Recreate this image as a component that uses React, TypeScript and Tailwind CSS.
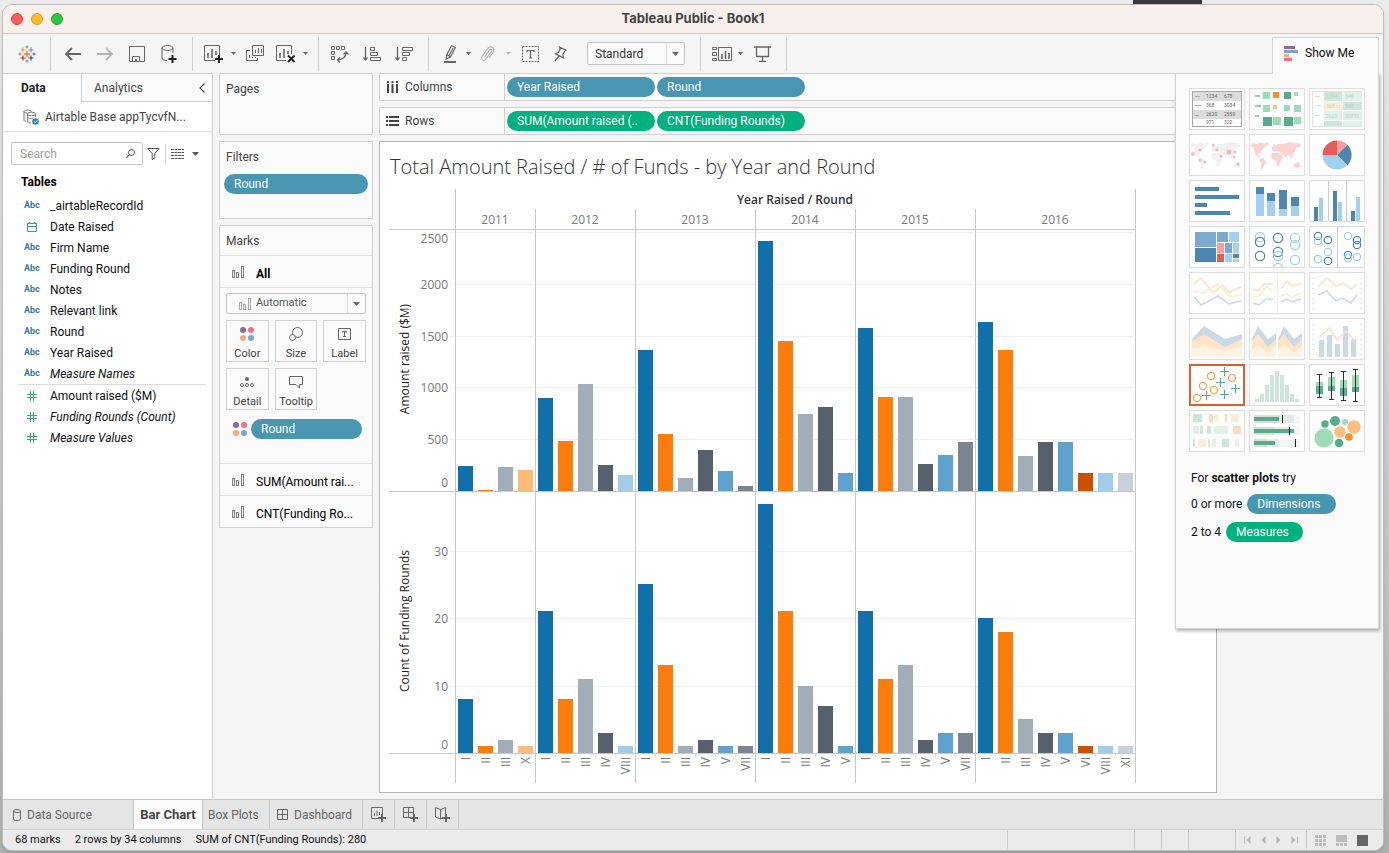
import type { ReactNode } from 'react';
import clsx from 'clsx';

interface Mark {
  round: string;
  amount: number;
  count: number;
}

interface YearGroup {
  year: string;
  marks: Mark[];
}

const ROUND_COLORS: Record<string, string> = {
  I: '#1170aa',
  II: '#fc7d0b',
  III: '#a3acb9',
  IV: '#57606c',
  V: '#5fa2ce',
  VI: '#c85200',
  VII: '#7b848f',
  VIII: '#a3cce9',
  X: '#ffbc79',
  XI: '#c8d0d9',
};

const m = (round: string, amount: number, count: number): Mark => ({ round, amount, count });

const YEARS: YearGroup[] = [
  { year: '2011', marks: [m('I', 241, 8), m('II', 10, 1), m('III', 232, 2), m('X', 203, 1)] },
  {
    year: '2012',
    marks: [m('I', 898, 21), m('II', 483, 8), m('III', 1033, 11), m('IV', 251, 3), m('VIII', 154, 1)],
  },
  {
    year: '2013',
    marks: [m('I', 1361, 25), m('II', 550, 13), m('III', 125, 1), m('IV', 396, 2), m('V', 193, 1), m('VII', 48, 1)],
  },
  {
    year: '2014',
    marks: [m('I', 2413, 37), m('II', 1448, 21), m('III', 743, 10), m('IV', 811, 7), m('V', 174, 1)],
  },
  {
    year: '2015',
    marks: [m('I', 1573, 21), m('II', 907, 11), m('III', 907, 13), m('IV', 261, 2), m('V', 347, 3), m('VII', 473, 3)],
  },
  {
    year: '2016',
    marks: [
      m('I', 1631, 20),
      m('II', 1361, 18),
      m('III', 338, 5),
      m('IV', 473, 3),
      m('V', 473, 3),
      m('VI', 174, 1),
      m('VIII', 174, 1),
      m('XI', 174, 1),
    ],
  },
];

const DIMENSIONS = [
  { name: '_airtableRecordId', type: 'abc' },
  { name: 'Date Raised', type: 'date' },
  { name: 'Firm Name', type: 'abc' },
  { name: 'Funding Round', type: 'abc' },
  { name: 'Notes', type: 'abc' },
  { name: 'Relevant link', type: 'abc' },
  { name: 'Round', type: 'abc' },
  { name: 'Year Raised', type: 'abc' },
  { name: 'Measure Names', type: 'abc', italic: true },
];

const MEASURES = [
  { name: 'Amount raised ($M)', type: 'num' },
  { name: 'Funding Rounds (Count)', type: 'num', italic: true },
  { name: 'Measure Values', type: 'num', italic: true },
];

/* ---------- small shared pieces ---------- */

function Icon({ w, h, children, className }: { w: number; h: number; children: ReactNode; className?: string }) {
  return (
    <svg
      width={w}
      height={h}
      viewBox={`0 0 ${w} ${h}`}
      fill="none"
      stroke="currentColor"
      aria-hidden="true"
      className={clsx('shrink-0', className)}
    >
      {children}
    </svg>
  );
}

function Caret({ w = 5 }: { w?: number }) {
  return (
    <Icon w={w} h={4}>
      <path d={`M0 0H${w}L${w / 2} ${w > 5 ? 4 : 3}Z`} fill="currentColor" stroke="none" />
    </Icon>
  );
}

function ToolButton({ label, className, children }: { label: string; className: string; children: ReactNode }) {
  return (
    <button type="button" aria-label={label} className={clsx('flex h-8 items-center justify-center', className)}>
      {children}
    </button>
  );
}

function Pill({ children, green, className }: { children: ReactNode; green?: boolean; className?: string }) {
  return (
    <button
      type="button"
      className={clsx(
        'h-5 truncate rounded-full px-2.5 text-left text-[12px] leading-5 text-white',
        green ? 'bg-[#00b180]' : 'bg-[#4996b2]',
        className,
      )}
    >
      {children}
    </button>
  );
}

function BarsIcon({ small }: { small?: boolean }) {
  return (
    <Icon w={12} h={12} className={small ? 'text-[#aaa]' : 'text-[#808080]'}>
      <rect x="0.5" y="4.5" width="2" height="7" />
      <rect x="4.5" y="6.5" width="2" height="5" />
      <rect x="9.5" y="0.5" width="2" height="11" />
    </Icon>
  );
}

function ColorDots() {
  return (
    <Icon w={14} h={14}>
      <g stroke="none">
        <circle cx="3" cy="3" r="3" fill="#8a6b9c" />
        <circle cx="11" cy="3" r="3" fill="#fa6f7f" />
        <circle cx="3" cy="11" r="3" fill="#f5a77a" />
        <circle cx="11" cy="11" r="3" fill="#7ea4ce" />
      </g>
    </Icon>
  );
}

/* ---------- window chrome ---------- */

function TitleBar() {
  return (
    <header className="flex h-[29px] items-center border-b border-[#cfcccc] bg-[#f9f0ee] px-2">
      <div className="flex flex-1 gap-2">
        <button type="button" aria-label="Close" className="size-3 rounded-full border border-[#e2463f] bg-[#ff5f57]" />
        <button type="button" aria-label="Minimize" className="size-3 rounded-full border border-[#e1a116] bg-[#febc2e]" />
        <button type="button" aria-label="Zoom" className="size-3 rounded-full border border-[#1aab29] bg-[#28c840]" />
      </div>
      <h1 className="font-['Inter',sans-serif] text-[13px] font-bold text-[#444]">Tableau Public - Book1</h1>
      <div className="flex-1" />
    </header>
  );
}

const LOGO_CROSSES = [
  { x: 9, y: 9, r: 3.2, c: '#eb7b33' },
  { x: 5, y: 5, r: 2.5, c: '#e8a33d' },
  { x: 13, y: 5, r: 2.5, c: '#5b8f9c' },
  { x: 5, y: 13, r: 2.5, c: '#c72037' },
  { x: 13, y: 13, r: 2.5, c: '#1f457e' },
  { x: 9, y: 2, r: 1.6, c: '#7199a6' },
  { x: 9, y: 16, r: 1.6, c: '#8b83ad' },
  { x: 2, y: 9, r: 1.6, c: '#7199a6' },
  { x: 16, y: 9, r: 1.6, c: '#5b6591' },
];

function Logo() {
  return (
    <Icon w={18} h={18}>
      {LOGO_CROSSES.map(({ x, y, r, c }) => (
        <path key={`${x}-${y}`} d={`M${x - r} ${y}H${x + r}M${x} ${y - r}V${y + r}`} stroke={c} strokeWidth={r > 3 ? 1.4 : 1.1} />
      ))}
    </Icon>
  );
}

function Toolbar() {
  const group = 'flex h-[34px] items-center border-r border-[#cfcfcf]';
  return (
    <div className="flex h-[39px] items-center bg-[#f5f5f5] text-[#666]">
      <div className={clsx(group, 'w-12 justify-center')}>
        <ToolButton label="Start page" className="w-8">
          <Logo />
        </ToolButton>
      </div>

      <div className={clsx(group, 'w-[142px] pl-1.5')}>
        <ToolButton label="Undo" className="w-8">
          <Icon w={16} h={14}>
            <path d="M16 7H1M7 1L1 7L7 13" strokeWidth="1.8" />
          </Icon>
        </ToolButton>
        <ToolButton label="Redo" className="w-8 text-[#b5b5b5]">
          <Icon w={16} h={14}>
            <path d="M0 7H15M9 1L15 7L9 13" strokeWidth="1.8" />
          </Icon>
        </ToolButton>
        <ToolButton label="Save" className="w-8">
          <Icon w={16} h={16}>
            <path d="M0.5 0.5H15.5V15.5H0.5ZM3.5 15.5V10.5H10.5V15.5" />
            <path d="M6 13H8V15H6Z" fill="currentColor" stroke="none" />
          </Icon>
        </ToolButton>
        <ToolButton label="New data source" className="w-8">
          <Icon w={16} h={18}>
            <ellipse cx="6.5" cy="3" rx="5.5" ry="2.4" />
            <path d="M1 3V13C1 14.5 3 15.5 6 15.5M12 3V8" />
            <path d="M11.5 10V18M7.5 14H15.5" stroke="#222" strokeWidth="2" />
          </Icon>
        </ToolButton>
      </div>

      <div className={clsx(group, 'w-[126px] pl-2')}>
        <ToolButton label="New worksheet" className="w-6">
          <Icon w={19} h={18}>
            <path d="M11 15.5H0.5V0.5H15.5V10" />
            <path d="M4 13V8M8 13V4M12 10V6" strokeWidth="1.6" />
            <path d="M15 10V18M11 14H19" stroke="#222" strokeWidth="2" />
          </Icon>
        </ToolButton>
        <ToolButton label="New worksheet options" className="w-4">
          <Caret />
        </ToolButton>
        <ToolButton label="Duplicate sheet" className="w-7">
          <Icon w={18} h={17}>
            <path d="M6.5 0.5H17.5V10.5H6.5ZM4 5.5H0.5V15.5H11.5V13" />
            <path d="M9.5 8V5M12.5 8V3M15.5 8V4M3.5 13V10M6.5 13V12M9.5 13V12" />
          </Icon>
        </ToolButton>
        <ToolButton label="Clear sheet" className="w-8">
          <Icon w={19} h={18}>
            <path d="M10 15.5H0.5V0.5H15.5V9" />
            <path d="M4 13V8M8 13V4M12 9V6" strokeWidth="1.6" />
            <path d="M12 10.5L18.5 17M18.5 10.5L12 17" stroke="#222" strokeWidth="2" />
          </Icon>
        </ToolButton>
        <ToolButton label="Clear options" className="w-2">
          <Caret />
        </ToolButton>
      </div>

      <div className={clsx(group, 'w-[110px] pl-[5px]')}>
        <ToolButton label="Swap rows and columns" className="w-8">
          <Icon w={18} h={18}>
            <path d="M0.5 1.5H3.5V4.5H0.5ZM5.5 1.5H8.5V4.5H5.5ZM10.5 1.5H13.5V4.5H10.5ZM0.5 6.5H3.5V9.5H0.5ZM0.5 11.5H3.5V14.5H0.5Z" />
            <path d="M15 7.5C15 12 12 14.5 6.5 15M12.5 9.5L15 7L17.5 9.5M9 12.5L6.5 15L9 17.5" strokeWidth="1.3" />
          </Icon>
        </ToolButton>
        <ToolButton label="Sort ascending" className="w-8">
          <Icon w={18} h={16}>
            <path d="M2.5 1V14M0.5 11.5L2.5 14L4.5 11.5" strokeWidth="1.3" />
            <path d="M7.5 1.5H11.5V4.5H7.5ZM7.5 6.5H14.5V9.5H7.5ZM7.5 11.5H17.5V14.5H7.5Z" />
          </Icon>
        </ToolButton>
        <ToolButton label="Sort descending" className="w-8">
          <Icon w={18} h={16}>
            <path d="M2.5 1V14M0.5 11.5L2.5 14L4.5 11.5" strokeWidth="1.3" />
            <path d="M7.5 1.5H17.5V4.5H7.5ZM7.5 6.5H14.5V9.5H7.5ZM7.5 11.5H11.5V14.5H7.5Z" />
          </Icon>
        </ToolButton>
      </div>

      <div className={clsx(group, 'w-[272px] pl-[7px]')}>
        <ToolButton label="Highlight" className="w-7">
          <Icon w={13} h={18}>
            <path d="M7.5 0.7L11.3 2.5L6.5 12L2.2 14L2.8 9.8ZM3 9.8L6.5 11.8M5 10.5L9 3" strokeWidth="1.2" />
            <path d="M0 17H12" strokeWidth="2" />
          </Icon>
        </ToolButton>
        <ToolButton label="Highlight options" className="w-2">
          <Caret />
        </ToolButton>
        <ToolButton label="Group members" className="w-8 text-[#b5b5b5]">
          <Icon w={14} h={16}>
            <path
              d="M3.5 11L8.5 4.2C9.8 2.5 11.6 3.8 10.5 5.4L5.2 12.9C3 16 -0.8 13.4 1.2 10.4L6.8 2.4C9.6 -1.2 14.6 2.2 12.3 6L8 12"
              strokeWidth="1.2"
            />
          </Icon>
        </ToolButton>
        <ToolButton label="Group options" className="w-2 text-[#b5b5b5]">
          <Caret />
        </ToolButton>
        <ToolButton label="Show mark labels" className="w-9">
          <Icon w={17} h={16}>
            <rect x="0.5" y="0.5" width="16" height="15" strokeDasharray="2 1" />
            <path d="M5 6V4.5H12V6M8.5 4.5V12M7 12H10" strokeWidth="1.2" />
          </Icon>
        </ToolButton>
        <ToolButton label="Fix axes" className="w-6">
          <Icon w={13} h={16}>
            <path d="M5.5 1L12 4.2L10.6 5.2L8.8 8.6L9.4 11.8L1.4 7.8L4.4 6.6L6.2 3.2ZM5 10L0.8 15" strokeWidth="1.2" />
          </Icon>
        </ToolButton>
        <div className="relative ml-[15px] flex h-[23px] w-[98px] items-center rounded-xs border border-[#c4c4c4] bg-[#fafafa]">
          <select
            aria-label="Fit"
            defaultValue="Standard"
            className="h-full w-full appearance-none bg-transparent pl-[7px] text-[12px] text-[#333] outline-none"
          >
            <option>Standard</option>
            <option>Entire View</option>
          </select>
          <span className="pointer-events-none absolute inset-y-0 right-0 flex w-[18px] items-center justify-center border-l border-[#dedede]">
            <Caret w={7} />
          </span>
        </div>
      </div>

      <div className={clsx(group, 'w-[86px] pl-[7px]')}>
        <ToolButton label="Show or hide cards" className="w-7">
          <Icon w={20} h={14}>
            <path d="M0.5 0.5H4.5V2.5H0.5ZM0.5 5.5H4.5V8.5H0.5ZM0.5 11.5H4.5V13.5H0.5ZM6.5 0.5H19.5V13.5H6.5Z" />
            <path d="M10 12V7M13.5 12V4M17 12V6" strokeWidth="1.6" />
          </Icon>
        </ToolButton>
        <ToolButton label="Card options" className="w-2">
          <Caret />
        </ToolButton>
        <ToolButton label="Presentation mode" className="w-9">
          <Icon w={17} h={16}>
            <path d="M0 1H17M2.5 1V10.5H14.5V1M8.5 10.5V15M5 15.5H12" strokeWidth="1.3" />
          </Icon>
        </ToolButton>
      </div>
    </div>
  );
}

/* ---------- data pane ---------- */

function FieldIcon({ type }: { type: string }) {
  if (type === 'abc') return <span className="w-[26px] text-[9px] font-bold text-[#3a7d9c]">Abc</span>;
  return (
    <span className="flex w-[26px] pl-[3px] text-[#3fa37c]">
      {type === 'date' ? (
        <Icon w={10} h={10}>
          <path d="M0.5 1.5H9.5V9.5H0.5ZM0.5 4.5H9.5M2.5 0V2M7.5 0V2" />
        </Icon>
      ) : (
        <Icon w={10} h={10}>
          <path d="M3.5 0V10M6.5 0V10M0 3.5H10M0 6.5H10" />
        </Icon>
      )}
    </span>
  );
}

function FieldList({ fields }: { fields: { name: string; type: string; italic?: boolean }[] }) {
  return (
    <ul>
      {fields.map((f) => (
        <li key={f.name} className="flex h-[21px] items-center pl-[21px] text-[12px] text-[#111]">
          <FieldIcon type={f.type} />
          <span className={clsx(f.italic && 'italic')}>{f.name}</span>
        </li>
      ))}
    </ul>
  );
}

function DataPane() {
  return (
    <aside className="w-[210px] shrink-0 border-r border-[#cfcfcf] bg-white">
      <div className="flex h-[29px] border-t border-[#cfcfcf]">
        <button type="button" className="w-[78px] pl-[18px] text-left text-[12px] font-bold text-[#222]">
          Data
        </button>
        <div className="flex flex-1 items-center justify-between border-b border-l border-[#cfcfcf] bg-[#fafafa] pr-[7px] pl-3 text-[#444]">
          <button type="button" className="text-[12px]">
            Analytics
          </button>
          <button type="button" aria-label="Collapse pane">
            <Icon w={6} h={10}>
              <path d="M5.5 0.5L1 5L5.5 9.5" strokeWidth="1.2" />
            </Icon>
          </button>
        </div>
      </div>

      <div className="flex h-[30px] items-center gap-1.5 border-b border-[#e0e0e0] pl-5 text-[12px] text-[#444]">
        <Icon w={16} h={16} className="text-[#777]">
          <path d="M1 2.5C2 0.5 7 0.5 8.5 2.5M1 2.5V11C1 12 2 12.5 3 12.5M1 2.5C1 3.8 2.5 4 4 4" />
          <ellipse cx="8.5" cy="5" rx="4" ry="1.8" />
          <path d="M4.5 5V12C4.5 13 6 14 8 14M12.5 5V8M4.5 8.5C5.5 9.8 8 10 9.5 9.5" />
          <circle cx="12.5" cy="12.5" r="3.3" fill="#3b86a8" stroke="none" />
          <path d="M11 12.5L12.2 13.7L14.2 11.4" stroke="#fff" />
        </Icon>
        Airtable Base appTycvfN...
      </div>

      <div className="flex h-[43px] items-center pl-2">
        <label className="flex h-[23px] w-[132px] items-center rounded-xs border border-[#c4c4c4] pr-[7px] pl-2 text-[#555]">
          <input
            type="text"
            placeholder="Search"
            aria-label="Search fields"
            className="w-full min-w-0 text-[12px] outline-none placeholder:text-[#a0a0a0]"
          />
          <Icon w={9} h={9}>
            <circle cx="5.5" cy="3.5" r="3" />
            <path d="M3.2 5.8L0.4 8.6" strokeWidth="1.2" />
          </Icon>
        </label>
        <button type="button" aria-label="Filter fields" className="ml-1 flex w-[19px] border-r border-[#d4d4d4] py-1 text-[#555]">
          <Icon w={13} h={12}>
            <path d="M0.8 0.5H12.2L7.8 5.5V10L5.2 11.5V5.5Z" />
          </Icon>
        </button>
        <button type="button" aria-label="View as list" className="flex w-[26px] items-center gap-2 pl-[5px] text-[#555]">
          <Icon w={13} h={10}>
            <path d="M0 0.5H13M0 3.5H13M0 6.5H13M0 9.5H13" strokeDasharray="3 0.5" />
          </Icon>
          <Caret w={7} />
        </button>
      </div>

      <h2 className="h-5 pl-[18px] text-[12px] leading-[14px] font-bold text-black">Tables</h2>
      <FieldList fields={DIMENSIONS} />
      <hr className="mr-1.5 ml-[15px] border-[#dcdcdc]" />
      <FieldList fields={MEASURES} />
    </aside>
  );
}

/* ---------- cards ---------- */

function MarkButton({ label, children }: { label: string; children: ReactNode }) {
  return (
    <button
      type="button"
      className="flex h-[42px] flex-col items-center justify-between border border-[#d0d0d0] bg-[#fafafa] pt-[5px] text-[11px] leading-[15px] text-[#444]"
    >
      <span className="flex h-4 items-center text-[#666]">{children}</span>
      {label}
    </button>
  );
}

function Cards() {
  const card = 'border border-[#d0d0d0] bg-[#fafafa]';
  return (
    <div className="ml-1.5 flex w-[154px] shrink-0 flex-col gap-1.5 text-[12px] text-[#444]">
      <section className={clsx(card, 'h-[62px] px-1.5 py-1.5')}>
        <h2 className="leading-[18px]">Pages</h2>
      </section>

      <section className={clsx(card, 'flex h-[78px] flex-col px-1 py-1.5')}>
        <h2 className="mb-2 pl-0.5 leading-[18px]">Filters</h2>
        <Pill>Round</Pill>
      </section>

      <section className={card}>
        <h2 className="h-[30px] border-b border-[#e0e0e0] pl-1.5 leading-[30px]">Marks</h2>
        <div className="flex h-8 items-center gap-3 border-b border-[#e0e0e0] pl-3 text-black">
          <BarsIcon />
          <span className="pt-1 font-bold">All</span>
        </div>
        <div className="relative mx-1.5 mt-[5px] flex h-[21px] items-center rounded-xs border border-[#c4c4c4] pl-3 text-[#666]">
          <BarsIcon small />
          <select
            aria-label="Mark type"
            defaultValue="Automatic"
            className="h-full min-w-0 flex-1 appearance-none bg-transparent pl-[5px] text-[11px] text-[#555] outline-none"
          >
            <option>Automatic</option>
            <option>Bar</option>
            <option>Line</option>
          </select>
          <span className="pointer-events-none absolute inset-y-0 right-0 flex w-[18px] items-center justify-center border-l border-[#dedede]">
            <Caret w={7} />
          </span>
        </div>
        <div className="mx-1.5 mt-1.5 grid grid-cols-3 gap-1.5">
          <MarkButton label="Color">
            <ColorDots />
          </MarkButton>
          <MarkButton label="Size">
            <Icon w={14} h={14}>
              <circle cx="8.5" cy="5.5" r="5" />
              <circle cx="3.5" cy="10.5" r="3" fill="#fafafa" />
            </Icon>
          </MarkButton>
          <MarkButton label="Label">
            <Icon w={13} h={12}>
              <path d="M0.5 0.5H12.5V11.5H0.5ZM4.5 4.5V3.5H8.5V4.5M6.5 3.5V8.5M5 8.5H8" />
            </Icon>
          </MarkButton>
          <MarkButton label="Detail">
            <Icon w={14} h={12}>
              <circle cx="7" cy="3" r="2" fill="currentColor" stroke="none" />
              <circle cx="2" cy="9" r="1.5" />
              <circle cx="7" cy="9" r="1.5" />
              <circle cx="12" cy="9" r="1.5" />
            </Icon>
          </MarkButton>
          <MarkButton label="Tooltip">
            <Icon w={14} h={13}>
              <path d="M0.5 0.5H13.5V8.5H10.5V12L7 8.5H0.5Z" />
            </Icon>
          </MarkButton>
        </div>
        <div className="mt-[9px] mb-6 flex items-center gap-1 pr-2.5 pl-[13px]">
          <ColorDots />
          <Pill className="flex-1">Round</Pill>
        </div>
        {['SUM(Amount rai...', 'CNT(Funding Ro...'].map((name) => (
          <div key={name} className="flex h-8 items-center gap-3 border-t border-[#e0e0e0] pl-3 text-black">
            <BarsIcon />
            <span className="pt-1">{name}</span>
          </div>
        ))}
      </section>
    </div>
  );
}

/* ---------- shelves and sheet ---------- */

function Shelf({ label, icon, children }: { label: string; icon: ReactNode; children: ReactNode }) {
  return (
    <div className="flex h-7 border border-[#cfcfcf] bg-[#fafafa]">
      <div className="flex w-[125px] items-center gap-1.5 border-r border-[#cfcfcf] pl-1.5 text-[12px] text-[#444]">
        {icon}
        {label}
      </div>
      <div className="flex items-center gap-0.5 pl-0.5">{children}</div>
    </div>
  );
}

const LEFT = 66;
const CELL = 20;
const PANE_TOP = 40;
const PANE_MID = 302;
const PANE_BOTTOM = 564;

interface PaneProps {
  bottom: number;
  scale: number;
  ticks: number[];
  labelTop: number;
  title: string;
  titleY: number;
  value: (mark: Mark) => number;
}

function Pane({ bottom, scale, ticks, labelTop, title, titleY, value }: PaneProps) {
  const marks = YEARS.flatMap((y) => y.marks);
  return (
    <g>
      <text transform={`translate(20 ${titleY}) rotate(-90)`} textAnchor="middle" fontSize="12" fill="#222">
        {title}
      </text>
      {ticks.map((t) => {
        const y = bottom - Math.round(t * scale);
        return (
          <g key={t}>
            {t > 0 && <path d={`M${LEFT - 5} ${y + 0.5}H${LEFT + marks.length * CELL}`} stroke="#f0f0f0" />}
            <text x={LEFT - 7} y={t === 0 ? bottom - 4 : Math.max(y + 5, labelTop)} textAnchor="end" fontSize="12" fill="#787878">
              {t}
            </text>
          </g>
        );
      })}
      {marks.map((mark, i) => {
        const h = Math.max(1, Math.round(value(mark) * scale));
        return <rect key={i} x={LEFT + i * CELL + 3} y={bottom - h} width={15} height={h} fill={ROUND_COLORS[mark.round]} />;
      })}
      <path d={`M0 ${bottom + 0.5}H${LEFT + marks.length * CELL + 1}`} stroke="#c8c8c8" />
    </g>
  );
}

function Chart() {
  const marks = YEARS.flatMap((y) => y.marks);
  const starts = YEARS.map((_, i) => YEARS.slice(0, i).reduce((n, y) => n + y.marks.length, 0) * CELL + LEFT);
  const right = LEFT + marks.length * CELL;
  return (
    <svg
      width="748"
      height="594"
      viewBox="0 0 748 594"
      className="font-['Open_Sans',sans-serif]"
      role="img"
      aria-label="Amount raised and number of funding rounds by year and round"
    >
      <text x={(LEFT + right) / 2} y="15" textAnchor="middle" fontSize="12" fontWeight="600" fill="#333">
        Year Raised / Round
      </text>
      <Pane
        bottom={PANE_MID}
        scale={0.1036}
        ticks={[0, 500, 1000, 1500, 2000, 2500]}
        labelTop={54}
        title="Amount raised ($M)"
        titleY={170}
        value={(mk) => mk.amount}
      />
      <Pane
        bottom={PANE_BOTTOM}
        scale={6.74}
        ticks={[0, 10, 20, 30]}
        labelTop={0}
        title="Count of Funding Rounds"
        titleY={432}
        value={(mk) => mk.count}
      />
      <path d={`M0 ${PANE_TOP + 0.5}H${right + 1}`} stroke="#c8c8c8" />
      {marks.map((mark, i) => (
        <g key={i}>
          <path d={`M${LEFT + (i + 1) * CELL + 0.5} ${PANE_BOTTOM + 1}V${PANE_BOTTOM + 4}`} stroke="#e6e6e6" />
          <text
            transform={`translate(${LEFT + i * CELL + 15} ${PANE_BOTTOM + 4}) rotate(-90)`}
            textAnchor="end"
            fontSize="12"
            fill="#787878"
          >
            {mark.round}
          </text>
        </g>
      ))}
      {YEARS.map((group, i) => (
        <g key={group.year}>
          <path d={`M${starts[i] + 0.5} ${i === 0 ? 0 : 20}V594`} stroke="#c8c8c8" />
          <text x={starts[i] + (group.marks.length * CELL) / 2} y="35" textAnchor="middle" fontSize="12" fill="#787878">
            {group.year}
          </text>
        </g>
      ))}
      <path d={`M${right + 0.5} 0V594`} stroke="#c8c8c8" />
    </svg>
  );
}

function Worksheet() {
  return (
    <main className="ml-1.5 flex min-w-0 flex-1 flex-col gap-1.5 pb-1.5">
      <div className="mr-1.5 flex flex-col gap-1.5">
        <Shelf
          label="Columns"
          icon={
            <Icon w={13} h={12}>
              <path d="M2 0V12M6.5 0V12M11 0V12" strokeWidth="2" strokeDasharray="2 1 9 0" />
            </Icon>
          }
        >
          <Pill className="w-[148px]">Year Raised</Pill>
          <Pill className="w-[148px]">Round</Pill>
        </Shelf>
        <Shelf
          label="Rows"
          icon={
            <Icon w={13} h={10}>
              <path d="M0 1H13M0 5H13M0 9H13" strokeWidth="2" strokeDasharray="2 1 10 0" />
            </Icon>
          }
        >
          <Pill green className="w-[148px]">
            SUM(Amount raised (..
          </Pill>
          <Pill green className="w-[148px]">
            CNT(Funding Rounds)
          </Pill>
        </Shelf>
      </div>
      <section className="mr-[166px] flex-1 border border-[#b4b4b4] bg-white pl-[9px]">
        <h2 className="h-[47px] pl-px font-['Open_Sans',sans-serif] text-[20px] leading-[50px] font-light text-[#333]">
          Total Amount Raised / # of Funds - by Year and Round
        </h2>
        <Chart />
      </section>
    </main>
  );
}

/* ---------- show me ---------- */

const DARK = '#4f86ae';
const MID = '#7ba9cf';
const LIGHT = '#a3cff0';
const RED = '#e15f56';
const PINK = '#ff9d9a';
const GREEN = '#55ad89';
const MINT = '#9cdcb6';
const PALE_GREEN = '#cce6da';
const PALER_GREEN = '#e0f2e8';
const PEACH = '#fbdcc0';
const PALE_PEACH = '#fdebd9';
const PALE_BLUE = '#cbd9e7';

type Box = [number, number, number, number, string];

function Boxes({ items }: { items: Box[] }) {
  return (
    <>
      {items.map(([x, y, w, h, fill], i) => (
        <rect key={i} x={x} y={y} width={w} height={h} fill={fill} />
      ))}
    </>
  );
}

function Rings({ items, r, width = 1.2 }: { items: [number, number, string][]; r: number; width?: number }) {
  return (
    <>
      {items.map(([cx, cy, stroke], i) => (
        <circle key={i} cx={cx} cy={cy} r={r} fill="none" stroke={stroke} strokeWidth={width} />
      ))}
    </>
  );
}

function Lines({ items }: { items: [string, string][] }) {
  return (
    <>
      {items.map(([points, stroke]) => (
        <polyline key={points} points={points} fill="none" stroke={stroke} strokeWidth="1.5" />
      ))}
    </>
  );
}

const WORLD =
  'M1 10L3 8L6 9L9 8L14 8L16 11L13 14L11 17L9 18L8 20L11 23L9 23L6 20L4 16L4 12L1 12ZM15 8L19 7L18 10L16 11ZM10 24L13 23L17 27L14 31L12 35L11 34L11 28L9 26ZM22 13L24 9L26 11L28 9L33 9L40 7L51 9L50 12L46 13L45 16L43 19L42 24L40 21L37 20L36 24L34 20L32 19L30 17L27 16L24 17L22 16ZM22 18L28 18L31 19L33 22L31 26L29 31L27 32L26 26L22 24L21 21ZM44 29L48 27L51 31L48 33L44 32Z';

const TICKS = 'M3.5 5V36M51.5 5V36';

const THUMBS: { name: string; art: ReactNode }[] = [
  {
    name: 'text table',
    art: (
      <>
        <rect x="2.5" y="2.5" width="49" height="35" fill="#fff" stroke="#a8a8a8" />
        <Boxes
          items={[
            [3, 3, 48, 9, '#dcdcdc'],
            [3, 21, 48, 9, '#dcdcdc'],
            [5, 7, 5, 1, '#aaa'],
            [5, 16, 6, 1, '#aaa'],
            [5, 26, 4, 1, '#aaa'],
          ]}
        />
        <g fontSize="5" fill="#666">
          <text x="16" y="9">1234</text>
          <text x="34" y="9">678</text>
          <text x="16" y="18">368</text>
          <text x="34" y="18">3034</text>
          <text x="16" y="27">2620</text>
          <text x="34" y="27">2559</text>
          <text x="16" y="35">971</text>
          <text x="34" y="35">322</text>
        </g>
      </>
    ),
  },
  {
    name: 'heat map',
    art: (
      <Boxes
        items={[
          [5, 6, 5, 2, '#bbb'],
          [5, 16, 6, 2, '#bbb'],
          [5, 26, 4, 2, '#bbb'],
          [13, 3, 7, 7, MINT],
          [23, 3, 6, 6, '#f28e2b'],
          [34, 3, 7, 7, GREEN],
          [44, 3, 4, 4, MINT],
          [13, 16, 7, 7, MINT],
          [23, 16, 4, 4, '#ffbe7d'],
          [34, 16, 6, 6, MINT],
          [44, 16, 7, 7, MINT],
          [13, 28, 9, 9, GREEN],
          [23, 28, 8, 8, MINT],
          [34, 28, 9, 9, GREEN],
          [44, 28, 7, 7, MINT],
        ]}
      />
    ),
  },
  {
    name: 'highlight table',
    art: (
      <>
        <rect x="2.5" y="2.5" width="49" height="35" fill="#fff" stroke="#e2e2e2" />
        <Boxes
          items={[
            [5, 7, 5, 1, '#ddd'],
            [5, 16, 6, 1, '#ddd'],
            [5, 26, 4, 1, '#ddd'],
            [14, 3, 18, 9, PALE_GREEN],
            [33, 3, 18, 9, PALER_GREEN],
            [14, 13, 18, 8, '#fdebd9'],
            [33, 13, 18, 8, PALE_GREEN],
            [14, 22, 18, 9, PALER_GREEN],
            [33, 22, 18, 9, PALER_GREEN],
            [14, 32, 18, 5, PALE_GREEN],
            [33, 32, 18, 5, PALER_GREEN],
          ]}
        />
        <g fontSize="5" fill="#bcd0c6">
          <text x="16" y="9">1234</text>
          <text x="35" y="9">546</text>
          <text x="16" y="19">368</text>
          <text x="35" y="19">340</text>
          <text x="16" y="29">2620</text>
          <text x="35" y="29">50890</text>
        </g>
      </>
    ),
  },
  {
    name: 'symbol map',
    art: (
      <>
        <path d={WORLD} fill="#f0f0f0" />
        <g fill="#d9848f" fillOpacity="0.5">
          <circle cx="3" cy="19" r="2" />
          <circle cx="10" cy="15" r="1.5" />
          <circle cx="10" cy="25" r="1.5" />
          <circle cx="15" cy="27" r="1.5" />
          <circle cx="23" cy="10" r="1.5" />
          <circle cx="27" cy="15" r="1.5" />
          <circle cx="31" cy="21" r="1.5" />
          <circle cx="39" cy="17" r="2.5" />
          <circle cx="45" cy="17" r="1.5" />
          <circle cx="44" cy="22" r="1.5" />
          <circle cx="48" cy="29" r="1.5" />
        </g>
      </>
    ),
  },
  { name: 'filled map', art: <path d={WORLD} fill="#fbd3d2" /> },
  {
    name: 'pie chart',
    art: (
      <>
        <path d="M27 20V5.5A14.5 14.5 0 0 0 12.5 20Z" fill={RED} />
        <path d="M27 20L37.3 9.7A14.5 14.5 0 0 0 27 5.5Z" fill={PINK} />
        <path d="M27 20L37.3 30.3A14.5 14.5 0 0 0 37.3 9.7Z" fill={DARK} />
        <path d="M27 20H12.5A14.5 14.5 0 0 0 37.3 30.3Z" fill={LIGHT} />
      </>
    ),
  },
  {
    name: 'horizontal bars',
    art: (
      <Boxes
        items={[
          [5, 6, 24, 4, DARK],
          [5, 14, 44, 4, DARK],
          [5, 22, 12, 4, DARK],
          [5, 30, 35, 4, DARK],
        ]}
      />
    ),
  },
  {
    name: 'stacked bars',
    art: (
      <Boxes
        items={[
          [6, 6, 8, 7, DARK],
          [6, 13, 8, 22, LIGHT],
          [17, 12, 8, 8, DARK],
          [17, 20, 8, 15, LIGHT],
          [29, 9, 8, 19, DARK],
          [29, 28, 8, 7, LIGHT],
          [41, 16, 8, 9, DARK],
          [41, 25, 8, 10, LIGHT],
        ]}
      />
    ),
  },
  {
    name: 'side-by-side bars',
    art: (
      <Boxes
        items={[
          [18, 0, 1, 40, '#ccc'],
          [36, 0, 1, 40, '#ccc'],
          [4, 26, 4, 14, DARK],
          [9, 17, 4, 23, LIGHT],
          [23, 10, 4, 30, DARK],
          [28, 21, 4, 19, LIGHT],
          [41, 30, 4, 10, DARK],
          [46, 16, 4, 24, LIGHT],
        ]}
      />
    ),
  },
  {
    name: 'treemap',
    art: (
      <Boxes
        items={[
          [5, 5, 21, 15, MID],
          [5, 21, 21, 14, DARK],
          [27, 5, 11, 10, MID],
          [39, 5, 10, 10, LIGHT],
          [27, 16, 7, 10, PINK],
          [35, 16, 7, 10, MID],
          [43, 16, 6, 10, LIGHT],
          [27, 27, 7, 8, RED],
          [35, 27, 7, 8, LIGHT],
          [43, 27, 6, 4, DARK],
          [43, 32, 6, 3, LIGHT],
        ]}
      />
    ),
  },
  {
    name: 'circle views',
    art: (
      <Rings
        r={4.7}
        items={[
          [10, 10, LIGHT],
          [10, 15, DARK],
          [10, 29, DARK],
          [28, 11, DARK],
          [28, 25, DARK],
          [28, 29, LIGHT],
          [28, 41, LIGHT],
          [45, 11, LIGHT],
          [45, 18, LIGHT],
          [45, 33, LIGHT],
        ]}
      />
    ),
  },
  {
    name: 'side-by-side circles',
    art: (
      <>
        <rect x="27" width="1" height="40" fill="#ccc" />
        <Rings
          r={3.7}
          items={[
            [8, 9, DARK],
            [8, 14, LIGHT],
            [18, 13, DARK],
            [18, 25, LIGHT],
            [8, 32, LIGHT],
            [18, 34, DARK],
            [38, 9, LIGHT],
            [47, 13, DARK],
            [47, 18, DARK],
            [38, 28, DARK],
            [38, 31, LIGHT],
            [47, 30, LIGHT],
          ]}
        />
      </>
    ),
  },
  {
    name: 'lines (continuous)',
    art: (
      <Lines
        items={[
          ['4,11 11,5 23,20 32,12 39,19 51,14', '#fde0c4'],
          ['4,18 13,20 27,11 41,24 51,22', '#fdeccb'],
          ['4,24 11,32 28,23 39,31 51,28', PALE_BLUE],
        ]}
      />
    ),
  },
  {
    name: 'lines (discrete)',
    art: (
      <>
        <rect x="27" width="1" height="40" fill="#eee" />
        <Lines
          items={[
            ['3,16 8,18 14,11 23,11', '#fde0c4'],
            ['31,15 37,8 42,13 51,11', '#fde0c4'],
            ['3,24 9,23 16,14 23,18', '#fdeccb'],
            ['31,23 37,21 42,24 51,20', '#fdeccb'],
            ['3,30 9,32 16,26 23,26', PALE_BLUE],
            ['31,29 37,26 42,29 51,26', PALE_BLUE],
          ]}
        />
      </>
    ),
  },
  {
    name: 'dual lines',
    art: (
      <>
        <path d={TICKS} stroke="#ececec" strokeWidth="3" strokeDasharray="1 4" />
        <Lines
          items={[
            ['8,14 17,5 26,13 33,10 41,16 47,11', '#fde0c4'],
            ['8,22 17,18 26,28 32,25 41,30 47,22', PALE_BLUE],
          ]}
        />
      </>
    ),
  },
  {
    name: 'area charts (continuous)',
    art: (
      <>
        <path d="M2 20L14 7L35 20L52 15V38H2Z" fill={PALE_BLUE} />
        <path d="M2 22L14 15L35 28L52 20V38H2Z" fill="#fde3c8" />
        <path d="M2 29L14 26L35 32L52 27V38H2Z" fill="#fef3e3" />
      </>
    ),
  },
  {
    name: 'area charts (discrete)',
    art: (
      <>
        <path d="M2 20L8 7L18 20L26 14V38H2ZM28 20L34 7L44 20L52 14V38H28Z" fill={PALE_BLUE} />
        <path d="M2 22L8 15L18 28L26 20V38H2ZM28 22L34 15L44 28L52 20V38H28Z" fill="#fde3c8" />
        <path d="M2 31L8 26L18 34L26 26V38H2ZM28 31L34 26L44 34L52 26V38H28Z" fill="#fef3e3" />
      </>
    ),
  },
  {
    name: 'dual combination',
    art: (
      <>
        <path d={TICKS} stroke="#ececec" strokeWidth="3" strokeDasharray="1 4" />
        <Boxes
          items={[
            [9, 21, 5, 17, PALE_BLUE],
            [17, 16, 5, 22, PALE_BLUE],
            [25, 25, 5, 13, PALE_BLUE],
            [33, 7, 5, 31, PALE_BLUE],
            [41, 20, 5, 18, PALE_BLUE],
          ]}
        />
        <Lines items={[['10,18 19,9 27,21 36,12 45,22', '#fde0c4']]} />
      </>
    ),
  },
  {
    name: 'scatter plots',
    art: (
      <>
        <Rings
          r={3.5}
          items={[
            [21, 11, '#f5a04c'],
            [42, 13, '#f5a04c'],
            [13, 21, '#f5a04c'],
            [24, 25, '#f5a04c'],
            [7, 33, '#f5a04c'],
          ]}
        />
        <path
          d="M30 6.5H39M34.5 2V11M26 17.5H35M30.5 13V22M41 23.5H50M45.5 19V28M12 30.5H21M16.5 26V35M30 29.5H39M34.5 25V34"
          stroke={GREEN}
          strokeWidth="1.2"
        />
      </>
    ),
  },
  {
    name: 'histogram',
    art: (
      <Boxes
        items={[34, 29, 20, 10, 6, 10, 20, 29, 34].map((top, i): Box => [5 + i * 5, top, 4, 37 - top, PALE_GREEN])}
      />
    ),
  },
  {
    name: 'box-and-whisker plot',
    art: (
      <>
        <Boxes
          items={[
            [6, 17, 7, 4, MINT],
            [6, 21, 7, 8, GREEN],
            [18, 12, 7, 9, MINT],
            [18, 21, 7, 5, GREEN],
            [30, 15, 7, 8, MINT],
            [30, 23, 7, 8, GREEN],
            [42, 10, 7, 12, MINT],
            [42, 22, 7, 5, GREEN],
          ]}
        />
        <path
          d="M7 9.5H12M9.5 9.5V32.5M7 32.5H12M19 7.5H24M21.5 7.5V34.5M19 34.5H24M31 6.5H36M33.5 6.5V35.5M31 35.5H36M43 4.5H48M45.5 4.5V36.5M43 36.5H48"
          stroke="#333"
        />
      </>
    ),
  },
  {
    name: 'gantt chart',
    art: (
      <Boxes
        items={[
          [3, 3, 9, 8, PALE_GREEN],
          [19, 3, 4, 8, PEACH],
          [24, 3, 4, 8, PALE_PEACH],
          [35, 3, 2, 8, PEACH],
          [41, 3, 8, 8, PALE_PEACH],
          [3, 15, 6, 8, PALER_GREEN],
          [10, 15, 3, 8, PALE_GREEN],
          [17, 15, 4, 8, PALE_GREEN],
          [24, 15, 14, 8, PALER_GREEN],
          [43, 15, 8, 8, PEACH],
          [3, 28, 2, 8, PALE_GREEN],
          [8, 28, 8, 8, PALE_PEACH],
          [18, 28, 2, 8, PEACH],
          [22, 28, 4, 8, PALER_GREEN],
          [32, 28, 7, 8, PALE_GREEN],
          [45, 28, 4, 8, PALE_PEACH],
        ]}
      />
    ),
  },
  {
    name: 'bullet graph',
    art: (
      <Boxes
        items={[
          [4, 4, 46, 8, '#f4f6f9'],
          [4, 4, 40, 8, '#e8e8e8'],
          [4, 4, 25, 8, '#dcdcdc'],
          [4, 6, 25, 4, GREEN],
          [32, 4, 1, 8, '#222'],
          [4, 16, 46, 8, '#f4f6f9'],
          [4, 16, 36, 8, '#e8e8e8'],
          [4, 16, 20, 8, '#dcdcdc'],
          [4, 18, 40, 4, GREEN],
          [39, 16, 1, 8, '#222'],
          [4, 28, 46, 8, '#f4f6f9'],
          [4, 28, 25, 8, '#e8e8e8'],
          [4, 28, 13, 8, '#dcdcdc'],
          [4, 30, 21, 4, GREEN],
          [45, 28, 1, 8, '#222'],
        ]}
      />
    ),
  },
  {
    name: 'packed bubbles',
    art: (
      <>
        <circle cx="14" cy="27" r="9.5" fill={MINT} />
        <circle cx="15" cy="13" r="3.7" fill={GREEN} />
        <circle cx="25" cy="10" r="5" fill={GREEN} />
        <circle cx="35" cy="11" r="3" fill={MINT} />
        <circle cx="44" cy="16" r="6.7" fill="#ffbe7d" />
        <circle cx="30" cy="21" r="5.7" fill="#ffbe7d" />
        <circle cx="39" cy="26" r="3.8" fill="#f28e2b" />
        <circle cx="29" cy="32" r="4.3" fill={GREEN} />
      </>
    ),
  },
];

function ShowMe() {
  return (
    <div className="absolute top-8 right-1 flex w-[204px] flex-col items-end">
      <button
        type="button"
        className="relative z-10 -mb-px flex h-[37px] w-[107px] items-center gap-[7px] border border-b-0 border-[#d4d4d4] bg-[#fafafa] pr-4 pb-1.5 pl-[11px] text-[12px] whitespace-nowrap text-[#111]"
      >
        <Icon w={14} h={15}>
          <g stroke="none">
            <rect width="11" height="3" fill="#8a6b9c" />
            <rect y="4" width="14" height="3" fill="#7ea4ce" />
            <rect y="8" width="5" height="3" fill="#f5a77a" />
            <rect y="12" width="8" height="3" fill="#fa6f7f" />
          </g>
        </Icon>
        Show Me
      </button>
      <section className="h-[556px] w-full border border-[#d4d4d4] bg-[#fafafa] px-[13px] pt-3.5 shadow-[1px_2px_3px_rgba(0,0,0,0.3)]">
        <div className="grid w-44 grid-cols-3 gap-1">
          {THUMBS.map(({ name, art }) => (
            <button
              key={name}
              type="button"
              aria-label={name}
              className={clsx(
                'flex h-[42px] items-center justify-center overflow-hidden bg-white',
                name === 'scatter plots' ? 'border-2 border-[#d9622b]' : 'border border-[#dedede]',
              )}
            >
              <svg width="54" height="40" viewBox="0 0 54 40" className="shrink-0" aria-hidden="true">
                {art}
              </svg>
            </button>
          ))}
        </div>
        <div className="mt-4 flex flex-col gap-2 pl-0.5 text-[12px] leading-5 whitespace-nowrap text-[#111]">
          <p>
            For <b>scatter plots</b> try
          </p>
          <p className="-mt-0.5 flex gap-[5px]">
            0 or more <Pill className="w-[89px]">Dimensions</Pill>
          </p>
          <p className="flex gap-[5px]">
            2 to 4
            <Pill green className="w-[77px]">
              Measures
            </Pill>
          </p>
        </div>
      </section>
    </div>
  );
}

/* ---------- bottom bars ---------- */

function SheetTabs() {
  const tab = 'flex items-center border-r border-[#c8c8c8] whitespace-nowrap';
  return (
    <nav className="flex h-[30px] shrink-0 border-t border-[#c8c8c8] bg-[#e5e5e5] text-[12px] text-[#666]">
      <button type="button" className={clsx(tab, 'w-[131px] gap-1.5 pl-2.5')}>
        <Icon w={8} h={12}>
          <path d="M0.5 2C0.5 0 7.5 0 7.5 2V10C7.5 12 0.5 12 0.5 10ZM0.5 2C0.5 4 7.5 4 7.5 2" />
        </Icon>
        Data Source
      </button>
      <button type="button" className={clsx(tab, 'w-[69px] justify-center bg-[#fafafa] text-[13px] font-bold text-[#444]')}>
        Bar Chart
      </button>
      <button type="button" className={clsx(tab, 'w-[67px] pl-[5px]')}>
        Box Plots
      </button>
      <button type="button" className={clsx(tab, 'w-[93px] gap-1.5 pl-[7px]')}>
        <Icon w={11} h={11}>
          <path d="M0.5 0.5H10.5V10.5H0.5ZM5.5 0.5V10.5M0.5 5.5H10.5" />
        </Icon>
        Dashboard
      </button>
      <button type="button" aria-label="New worksheet" className={clsx(tab, 'w-8 justify-center')}>
        <Icon w={15} h={15}>
          <path d="M7 11.5H0.5V0.5H11.5V7M3.5 9V6M6 9V3.5M8.5 8V5" />
          <path d="M11 7V15M7 11H15" strokeWidth="2" />
        </Icon>
      </button>
      <button type="button" aria-label="New dashboard" className={clsx(tab, 'w-8 justify-center')}>
        <Icon w={15} h={15}>
          <path d="M7 10.5H0.5V0.5H10.5V7M5.5 0.5V10.5M0.5 5.5H10.5" />
          <path d="M11 7V15M7 11H15" strokeWidth="2" />
        </Icon>
      </button>
      <button type="button" aria-label="New story" className={clsx(tab, 'w-8 justify-center')}>
        <Icon w={15} h={15}>
          <path d="M7 11L5.5 12L0.5 10V0.5L5.5 2.5L10.5 0.5V7M5.5 2.5V12" />
          <path d="M11 7V15M7 11H15" strokeWidth="2" />
        </Icon>
      </button>
    </nav>
  );
}

function StatusBar() {
  return (
    <footer className="flex h-[21px] shrink-0 items-stretch border-t border-[#d0d0d0] bg-[#ebebeb] text-[11px] leading-5 whitespace-nowrap text-[#111]">
      <div className="flex flex-1 gap-3.5 pl-3">
        <span>68 marks</span>
        <span>2 rows by 34 columns</span>
        <span>SUM of CNT(Funding Rounds): 280</span>
      </div>
      <span className="w-[127px] border-l border-[#c8c8c8]" />
      <span className="w-[27px] border-l border-[#c8c8c8]" />
      <span className="w-[27px] border-l border-[#c8c8c8]" />
      <span className="w-[47px] border-l border-[#c8c8c8]" />
      <div className="flex w-[71px] items-center justify-between border-l border-[#c8c8c8] px-2 text-[#b4b4b4]">
        <button type="button" aria-label="First sheet">
          <Icon w={7} h={8}>
            <path d="M0.5 0.5V7.5" />
            <path d="M6.5 0L2.5 4L6.5 8Z" fill="currentColor" stroke="none" />
          </Icon>
        </button>
        <button type="button" aria-label="Previous sheet">
          <Icon w={5} h={8}>
            <path d="M4.5 0L0.5 4L4.5 8Z" fill="currentColor" stroke="none" />
          </Icon>
        </button>
        <button type="button" aria-label="Next sheet">
          <Icon w={5} h={8}>
            <path d="M0.5 0L4.5 4L0.5 8Z" fill="currentColor" stroke="none" />
          </Icon>
        </button>
        <button type="button" aria-label="Last sheet">
          <Icon w={7} h={8}>
            <path d="M6.5 0.5V7.5" />
            <path d="M0.5 0L4.5 4L0.5 8Z" fill="currentColor" stroke="none" />
          </Icon>
        </button>
      </div>
      <div className="flex w-[77px] items-center gap-2.5 border-l border-[#c8c8c8] pl-2 text-[#bcbcbc]">
        <button type="button" aria-label="Sheet sorter">
          <Icon w={11} h={11}>
            <path d="M0 1.5H11M0 5.5H11M0 9.5H11" strokeWidth="3" strokeDasharray="3 1" />
          </Icon>
        </button>
        <button type="button" aria-label="Filmstrip">
          <Icon w={11} h={11}>
            <path d="M0 3.5H11" strokeWidth="7" />
            <path d="M0 9.5H11" strokeWidth="3" strokeDasharray="3 1" />
          </Icon>
        </button>
        <button type="button" aria-label="Sheet view">
          <Icon w={11} h={11}>
            <rect width="11" height="11" fill="#666" stroke="none" />
          </Icon>
        </button>
      </div>
    </footer>
  );
}

export default function App() {
  return (
    <div className="relative flex min-h-screen flex-col bg-linear-to-b from-[#ececec] via-[#cdcdcf] to-[#b0b0b0] pt-1 pr-[5px] pb-0.5 pl-0.5 font-['Roboto',sans-serif]">
      {/* edge of another window behind this one */}
      <div className="absolute top-0 right-[187px] h-2 w-[69px] bg-[#38363f]" />
      <div className="relative flex flex-1 flex-col overflow-hidden rounded-[10px] border border-[#bdbdbd] bg-[#f5f5f5] shadow-md">
        <TitleBar />
        <Toolbar />
        <div className="flex flex-1">
          <DataPane />
          <Cards />
          <Worksheet />
        </div>
        <SheetTabs />
        <StatusBar />
        <ShowMe />
      </div>
    </div>
  );
}
